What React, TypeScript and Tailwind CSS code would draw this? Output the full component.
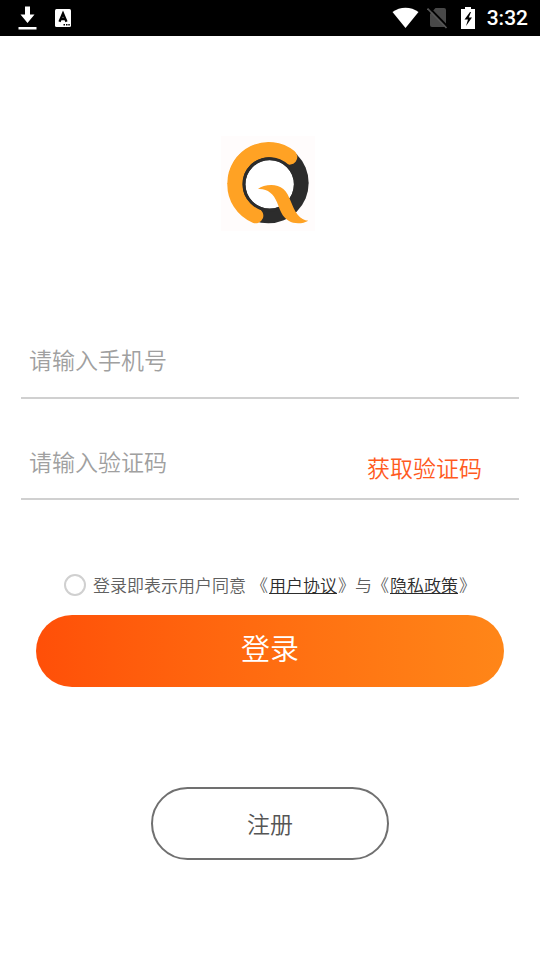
import { useState } from "react";

function StatusBar() {
  return (
    <header className="flex h-9 items-center justify-between bg-black pr-3 pl-[18px] text-white">
      <div className="flex items-center gap-[18px]">
        <svg width="19" height="24" viewBox="0 0 19 24" fill="currentColor" aria-hidden="true">
          <path d="M7 0.500h5v8h4.500L9.500 17 2.500 8.500H7zM0.500 21h18v2.500H0.500z" />
        </svg>
        <svg width="16" height="18" viewBox="0 0 16 18" aria-hidden="true">
          <rect width="16" height="18" rx="1.500" fill="#fff" />
          <path d="M4.500 12.800 8 4.500l3.500 8.300M5.800 10h4.400" fill="none" stroke="#000" strokeWidth="2.300" />
          <path d="M8.500 15h1.500v1.500H8.500zM11 15h1.500v1.500H11zM13.300 15h1.500v1.500h-1.500z" fill="#000" />
        </svg>
      </div>
      <div className="flex items-center">
        <svg width="27" height="22" viewBox="0 0 27 22" fill="currentColor" aria-hidden="true">
          <path d="M0.500 5C8-0.700 19-0.700 26.500 5L13.500 21z" />
        </svg>
        <svg className="ml-2" width="22" height="22" viewBox="0 0 22 22" aria-hidden="true">
          <path d="M8.500 1H17q2 0 2 2v15q0 2-2 2H5q-2 0-2-2V7z" fill="#484848" />
          <path d="M2 0.500 21 20" stroke="#000" strokeWidth="2" />
          <path d="M0.500 1.500 19.500 21" stroke="#555" strokeWidth="1.700" />
        </svg>
        <svg className="ml-3" width="14" height="22" viewBox="0 0 14 22" aria-hidden="true">
          <path d="M4 0h6v2h4v20H0V2h4z" fill="#fff" />
          <path d="M9 5 3.500 12.500H7L5 19l6-8.500H7.800L10 5z" fill="#000" />
        </svg>
        <span className="ml-3 font-[Roboto,sans-serif] text-[21px] leading-6 font-medium">3:32</span>
      </div>
    </header>
  );
}

function Logo() {
  return (
    <svg className="mx-auto block h-24 w-[98px]" viewBox="18 17 294 288" role="img" aria-label="Q">
      <rect x="18" y="17" width="282" height="285" fill="#fffcfc" />
      <circle cx="160" cy="158" r="121" fill="#2c2c2c" />
      <circle cx="164" cy="162" r="73" fill="#fff" />
      <path
        d="M224 80A101 101 0 0 0 60 159A101 101 0 0 0 122 256"
        fill="none"
        stroke="#ffa224"
        strokeWidth="46"
        strokeLinecap="round"
        strokeLinejoin="round"
      />
      <circle cx="164" cy="162" r="77" fill="none" stroke="#2c2c2c" strokeWidth="9" />
      <path
        d="M129 176C146 163 184 158 205 176C226 194 230 232 248 253C257 264 268 270 280 271C264 281 236 281 222 272C200 260 195 238 186 216C176 190 157 174 129 176Z"
        fill="#ffa224"
      />
    </svg>
  );
}

export default function App() {
  const [agreed, setAgreed] = useState(false);

  return (
    <div className="min-h-screen bg-white font-['Noto_Sans_CJK_SC',sans-serif] font-[350]">
      <StatusBar />
      <main className="px-[21px] pt-[100px] pb-[100px]">
        <Logo />
        <form onSubmit={(event) => event.preventDefault()}>
          <div className="mt-[89px] border-b-2 border-[#d0d0d0] px-2 py-5">
            <input
              type="tel"
              aria-label="手机号"
              placeholder="请输入手机号"
              className="block h-9 w-full text-[23px] leading-9 text-[#333] outline-none placeholder:text-[#a0a0a0]"
            />
          </div>
          <div className="flex h-[101px] items-end border-b-2 border-[#d0d0d0] pr-[37px] pl-2">
            <input
              type="text"
              aria-label="验证码"
              placeholder="请输入验证码"
              className="mb-[19px] block h-9 min-w-0 flex-1 text-[23px] leading-9 text-[#333] outline-none placeholder:text-[#a0a0a0]"
            />
            <button type="button" className="mb-[13px] h-9 text-[23px] leading-9 text-[#ff5a1e]">
              获取验证码
            </button>
          </div>
          <div className="mt-[73px] flex items-center justify-center gap-px text-[17px] leading-6 text-[#606060]">
            <input
              id="agree"
              type="checkbox"
              checked={agreed}
              onChange={(event) => setAgreed(event.target.checked)}
              className="mr-1.5 size-[22px] appearance-none rounded-full border-2 border-[#d0d0d0] checked:border-[#ff5a1e] checked:bg-[#ff5a1e]"
            />
            <label htmlFor="agree" className="mr-1">登录即表示用户同意</label>
            <span>《</span>
            <a href="#terms" className="text-[#2c2c2c] underline">用户协议</a>
            <span>》与《</span>
            <a href="#privacy" className="text-[#2c2c2c] underline">隐私政策</a>
            <span>》</span>
          </div>
          <div className="px-[15px] pt-[18px]">
            <button
              type="submit"
              className="block h-[72px] w-full rounded-full bg-linear-to-r from-[#ff4f08] to-[#ff8618] pb-1.5 text-[29px] text-white"
            >
              登录
            </button>
          </div>
          <button
            type="button"
            className="mx-auto mt-[100px] block h-[73px] w-[238px] rounded-full border-2 border-[#707070] text-[23px] text-[#555]"
          >
            注册
          </button>
        </form>
      </main>
    </div>
  );
}
